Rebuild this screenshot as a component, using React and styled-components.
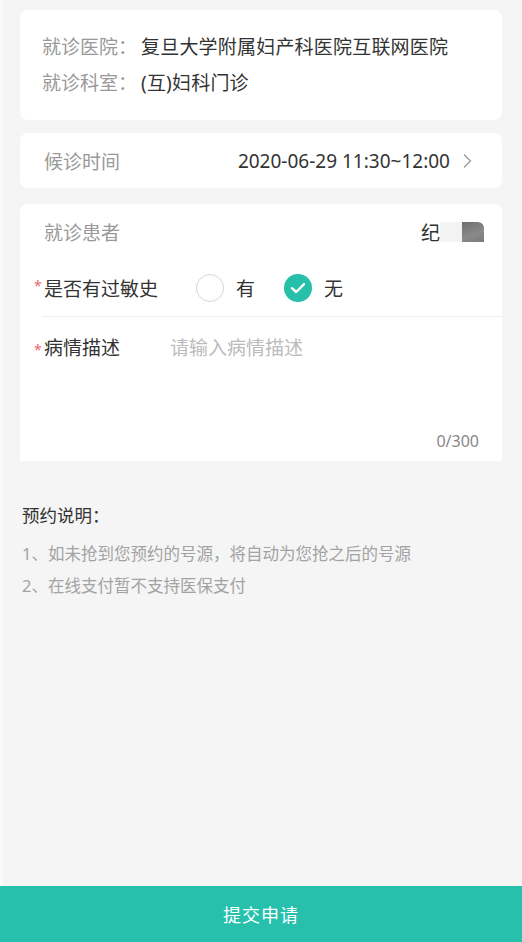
import React from 'react'
import styled, { createGlobalStyle } from 'styled-components'

const GlobalStyle = createGlobalStyle`
  html, body {
    margin: 0;
    padding: 0;
    background: #f5f5f5;
  }
  body {
    font-family: "Noto Sans", "Noto Sans CJK SC", sans-serif;
    color: #333;
  }
  * {
    box-sizing: border-box;
  }
`

const Page = styled.div`
  min-height: 100vh;
  display: flex;
  flex-direction: column;
  border-left: 3px solid #fafafa;
`

const Content = styled.main`
  flex: 1;
  padding: 10px 20px 0 17px;
`

const Card = styled.section`
  background: #fff;
  border-radius: ${(p) => p.$radius || '8px'};
  margin-top: ${(p) => p.$gap || '0'};
`

const InfoCard = styled(Card)`
  padding: 19px 22px;
`

const InfoLine = styled.div`
  display: flex;
  font-size: 19px;
  line-height: 36px;
`

const InfoLabel = styled.span`
  color: #999;
  margin-right: 4px;
`

const InfoValue = styled.span`
  color: #333;
  letter-spacing: 0.2px;
`

const Row = styled.div`
  display: flex;
  align-items: center;
  height: ${(p) => p.$height || '56px'};
  padding: 0 ${(p) => p.$padRight || '18px'} 0 24px;
  font-size: 19px;
`

const RowLabel = styled.span`
  color: #999;
  flex: 1;
`

const DateValue = styled.span`
  color: #333;
  font-size: 19px;
`

const Chevron = styled.svg`
  margin-left: 12px;
  width: 10px;
  height: 16px;
`

const PatientName = styled.span`
  display: flex;
  align-items: center;
  color: #333;
`

const BlurBlock = styled.span`
  display: inline-block;
  width: 22px;
  height: 20px;
  background: ${(p) => p.$dark ? 'linear-gradient(160deg, #6e6e6e, #8a8a8a 60%, #7a7a7a)' : '#f3f3f3'};
  border-top-right-radius: ${(p) => (p.$dark ? '6px' : '0')};
`

const FormCard = styled.section`
  background: #fff;
  border-radius: 0 0 2px 2px;
`

const FormRow = styled.div`
  display: flex;
  align-items: center;
  height: 56px;
  padding-left: 24px;
  font-size: 19px;
  color: #333;
`

const Divider = styled.div`
  height: 1px;
  background: #eeeeee;
  margin-left: 22px;
`

const Required = styled.span`
  position: relative;
  display: inline-block;
  width: ${(p) => p.$width || 'auto'};
  flex-shrink: 0;

  &::before {
    content: '*';
    position: absolute;
    left: -10px;
    top: 2px;
    color: #e86a6a;
    font-size: 14px;
  }
`

const RadioGroup = styled.div`
  display: flex;
  align-items: center;
  margin-left: 38px;
  gap: 29px;
`

const RadioOption = styled.label`
  display: flex;
  align-items: center;
  gap: 12px;
`

const RadioDot = styled.span`
  width: 28px;
  height: 28px;
  border-radius: 50%;
  display: flex;
  align-items: center;
  justify-content: center;
  border: ${(p) => (p.$checked ? 'none' : '1.5px solid #d6d6d6')};
  background: ${(p) => (p.$checked ? '#26bfa9' : '#fff')};
`

const DescArea = styled.div`
  display: flex;
  flex-direction: column;
  height: 144px;
  padding: 18px 23px 8px 24px;
`

const DescTop = styled.div`
  display: flex;
  flex: 1;
  font-size: 19px;
  line-height: 26px;
`

const TextInput = styled.textarea`
  flex: 1;
  border: none;
  outline: none;
  resize: none;
  padding: 0;
  margin: 0;
  font-family: inherit;
  font-size: 19px;
  line-height: 26px;
  color: #333;
  background: transparent;

  &::placeholder {
    color: #bbb;
  }
`

const Counter = styled.div`
  align-self: flex-end;
  font-size: 16px;
  color: #888;
  line-height: 24px;
`

const Notes = styled.div`
  padding: 40px 0 0 2px;
`

const NotesTitle = styled.h3`
  margin: 0 0 9px;
  font-size: 17.5px;
  font-weight: 400;
  color: #333;
  line-height: 28px;
`

const NoteLine = styled.p`
  margin: 0;
  font-size: 16.5px;
  color: #a3a3a3;
  line-height: 32px;
`

const SubmitButton = styled.button`
  height: 56px;
  border: none;
  margin-left: -3px;
  width: calc(100% + 3px);
  background: #26c0ad;
  color: #fff;
  font-family: inherit;
  font-size: 18px;
  letter-spacing: 1px;
`

function App() {
  return (
    <Page>
      <GlobalStyle />
      <Content>
        <InfoCard>
          <InfoLine>
            <InfoLabel>就诊医院：</InfoLabel>
            <InfoValue>复旦大学附属妇产科医院互联网医院</InfoValue>
          </InfoLine>
          <InfoLine>
            <InfoLabel>就诊科室：</InfoLabel>
            <InfoValue>(互)妇科门诊</InfoValue>
          </InfoLine>
        </InfoCard>

        <Card $gap="13px">
          <Row $height="55px" $padRight="30px">
            <RowLabel>候诊时间</RowLabel>
            <DateValue>2020-06-29 11:30~12:00</DateValue>
            <Chevron viewBox="0 0 10 16">
              <path d="M2 1.5 L8.5 8 L2 14.5" fill="none" stroke="#999" strokeWidth="1.3" />
            </Chevron>
          </Row>
        </Card>

        <Card $gap="16px" $radius="8px 8px 0 0">
          <Row>
            <RowLabel>就诊患者</RowLabel>
            <PatientName>
              纪
              <BlurBlock />
              <BlurBlock $dark />
            </PatientName>
          </Row>
        </Card>

        <FormCard>
          <FormRow>
            <Required>是否有过敏史</Required>
            <RadioGroup>
              <RadioOption>
                <RadioDot />
                有
              </RadioOption>
              <RadioOption>
                <RadioDot $checked>
                  <svg width="16" height="12" viewBox="0 0 16 12">
                    <path d="M2 6.2 L6.2 10 L14 2.2" fill="none" stroke="#fff" strokeWidth="2.4" strokeLinecap="round" strokeLinejoin="round" />
                  </svg>
                </RadioDot>
                无
              </RadioOption>
            </RadioGroup>
          </FormRow>
          <Divider />
          <DescArea>
            <DescTop>
              <Required $width="126px">病情描述</Required>
              <TextInput placeholder="请输入病情描述" maxLength={300} />
            </DescTop>
            <Counter>0/300</Counter>
          </DescArea>
        </FormCard>

        <Notes>
          <NotesTitle>预约说明：</NotesTitle>
          <NoteLine>1、如未抢到您预约的号源，将自动为您抢之后的号源</NoteLine>
          <NoteLine>2、在线支付暂不支持医保支付</NoteLine>
        </Notes>
      </Content>
      <SubmitButton>提交申请</SubmitButton>
    </Page>
  )
}

export default App
